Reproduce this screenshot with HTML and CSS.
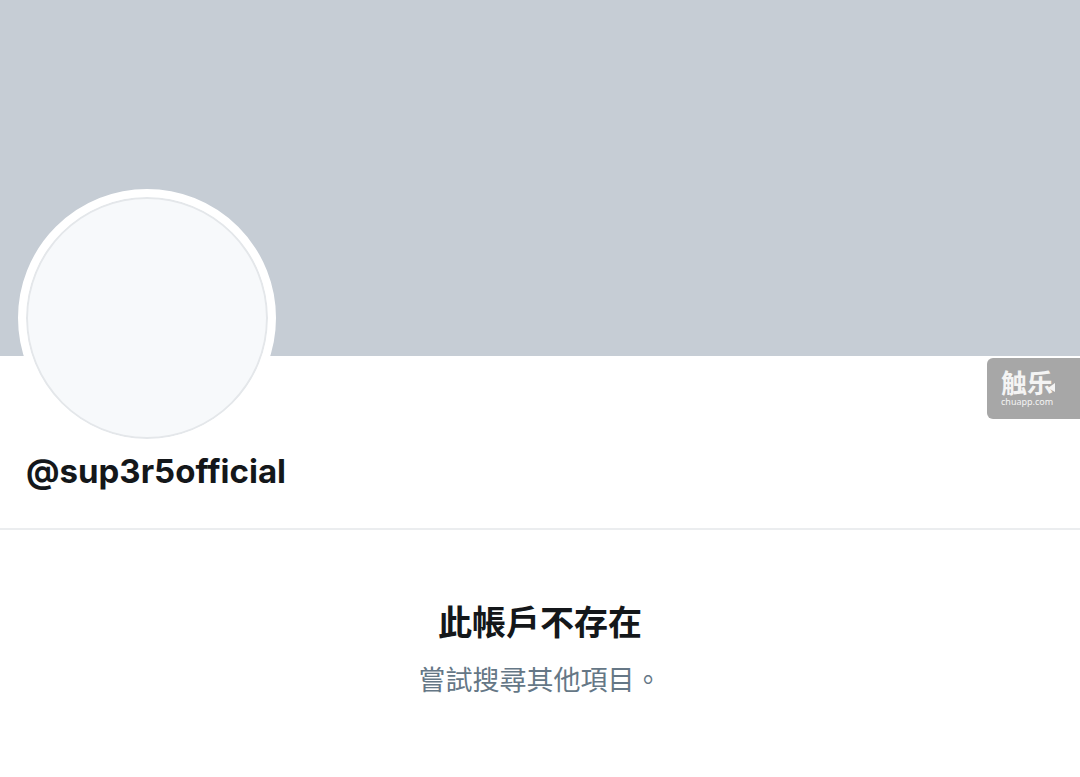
FILE: index.html
```html
<!DOCTYPE html>
<html lang="zh-Hant">
<head>
<meta charset="utf-8">
<meta name="viewport" content="width=device-width, initial-scale=1">
<title>@sup3r5official</title>
<link rel="stylesheet" href="styles.css">
</head>
<body>
<main>
  <header class="profile">
    <div class="banner"></div>
    <div class="identity">
      <div class="avatar"></div>
      <h1 class="handle">@sup3r5official</h1>
      <div class="badge" lang="zh-Hans">
        <span class="badge-name">触乐<svg class="badge-mark" viewBox="0 0 7 9" aria-hidden="true"><path d="M7 0V9L0 5Z" fill="#f4f4f4"/></svg></span>
        <span class="badge-site">chuapp.com</span>
      </div>
    </div>
  </header>
  <section class="notice">
    <h2 class="notice-title">此帳戶不存在</h2>
    <p class="notice-text">嘗試搜尋其他項目。</p>
  </section>
</main>
</body>
</html>
```
FILE: styles.css
```css
* {
  box-sizing: border-box;
}

body {
  margin: 0;
  background: #fff;
  color: #14171a;
  font-family: Inter, "Noto Sans CJK TC", sans-serif;
}

h1, h2, p {
  margin: 0;
}

.profile {
  border-bottom: 2px solid #ebedef;
}

.banner {
  height: 356px;
  background: #c6cdd5;
}

.identity {
  position: relative;
  display: flow-root;
  padding: 0 18px 35px;
}

.avatar {
  width: 258px;
  height: 258px;
  margin-top: -167px;
  border: 8px solid #fff;
  border-radius: 50%;
  background: #f7f9fb;
  box-shadow: inset 0 0 0 2px #e4e7ea;
}

.handle {
  padding: 2px 8px 0;
  font-size: 33px;
  line-height: 44px;
  font-weight: 700;
}

.badge {
  position: absolute;
  top: 2px;
  right: 0;
  display: flex;
  flex-direction: column;
  gap: 2px;
  width: 93px;
  height: 61px;
  padding: 11px 0 0 14px;
  border-radius: 6px 0 0 6px;
  background: #a7a7a7;
  color: #f4f4f4;
}

.badge-name {
  position: relative;
  width: 54px;
  font-family: "Noto Sans CJK SC", sans-serif;
  font-size: 26px;
  line-height: 26px;
  font-weight: 700;
}

.badge-mark {
  position: absolute;
  right: 0;
  bottom: 3px;
  width: 7px;
  height: 9px;
}

.badge-site {
  font-family: "Noto Sans", sans-serif;
  font-size: 9px;
  line-height: 10px;
}

.notice {
  padding: 65px 20px;
  text-align: center;
}

.notice-title {
  font-family: "Noto Sans CJK TC", sans-serif;
  font-size: 34px;
  line-height: 52px;
  font-weight: 700;
}

.notice-text {
  margin-top: 12px;
  color: #657786;
  font-family: "Noto Sans CJK TC", sans-serif;
  font-size: 27px;
  line-height: 40px;
}
```
